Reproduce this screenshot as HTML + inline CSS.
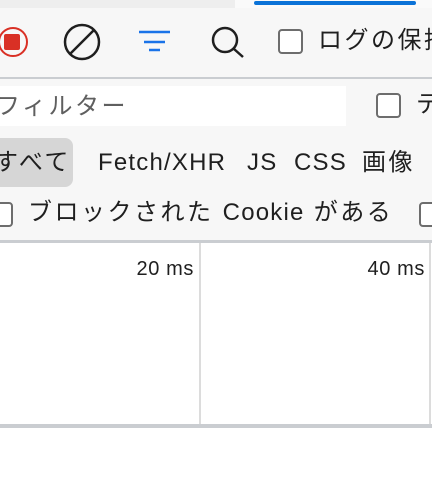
<!DOCTYPE html>
<html><head><meta charset="utf-8"><style>
*{margin:0;padding:0;box-sizing:border-box}
body{width:432px;height:504px;overflow:hidden;background:#fff;font-family:"Liberation Sans","Noto Sans CJK JP",sans-serif;color:#1f1f1f;position:relative}
.a{position:absolute}
.cb{position:absolute;width:25px;height:25px;border:2px solid #6d6d6d;border-radius:4px;background:#fff}
.t{position:absolute;white-space:nowrap;font-size:24px;line-height:30px}
.j{letter-spacing:2.5px}
.l{letter-spacing:1.2px}
</style></head><body>
<div class="a" style="left:0;top:0;width:432px;height:8px;background:#eeeeee"></div>
<div class="a" style="left:235px;top:0;width:197px;height:8px;background:#fafafa"></div>
<div class="a" style="left:254px;top:1px;width:162px;height:4px;background:#0b73d8;border-radius:2px"></div>
<div class="a" style="left:0;top:8px;width:432px;height:233px;background:#f7f7f7"></div>
<svg class="a" style="left:0;top:0" width="432" height="80">
<circle cx="13" cy="42" r="14" fill="none" stroke="#d93025" stroke-width="2"/>
<rect x="4" y="34" width="16" height="16" rx="2" fill="#d93025"/>
<circle cx="82" cy="42" r="17" fill="none" stroke="#1f1f1f" stroke-width="2.5"/>
<line x1="70" y1="54" x2="94" y2="30" stroke="#1f1f1f" stroke-width="2.5"/>
<line x1="139" y1="32" x2="170" y2="32" stroke="#1a73e8" stroke-width="2.5"/>
<line x1="144" y1="42" x2="165" y2="42" stroke="#1a73e8" stroke-width="2.5"/>
<line x1="149" y1="50" x2="160" y2="50" stroke="#1a73e8" stroke-width="2.5"/>
<circle cx="225" cy="40" r="12" fill="none" stroke="#1f1f1f" stroke-width="2.5"/>
<line x1="234" y1="49" x2="243" y2="57" stroke="#1f1f1f" stroke-width="2.5"/>
</svg>
<div class="cb" style="left:278px;top:29px"></div>
<div class="t j" style="left:318px;top:26px">ログの保持</div>
<div class="a" style="left:0;top:77px;width:432px;height:2px;background:#cacdd1"></div>
<div class="a" style="left:0;top:86px;width:346px;height:40px;background:#fff"></div>
<div class="t j" style="left:-4px;top:92px;color:#5f5f5f">フィルター</div>
<div class="cb" style="left:376px;top:93px"></div>
<div class="t" style="left:416px;top:90px">テ</div>
<div class="a" style="left:-10px;top:138px;width:83px;height:49px;background:#d6d6d6;border-radius:8px"></div>
<div class="t j" style="left:-6px;top:148px">すべて</div>
<div class="t l" style="left:98px;top:148px">Fetch/XHR</div>
<div class="t l" style="left:247px;top:148px">JS</div>
<div class="t l" style="left:294px;top:148px">CSS</div>
<div class="t j" style="left:362px;top:148px">画像</div>
<div class="cb" style="left:-12px;top:202px"></div>
<div class="t j" style="left:28px;top:198px">ブロックされた <span class="l" style="letter-spacing:1.2px">Cookie</span> がある</div>
<div class="cb" style="left:419px;top:202px"></div>
<div class="a" style="left:0;top:240px;width:432px;height:3px;background:#cacdd1"></div>
<div class="a" style="left:199px;top:243px;width:2px;height:181px;background:#dcdcdc"></div>
<div class="a" style="left:429px;top:243px;width:2px;height:181px;background:#dcdcdc"></div>
<div class="t" style="left:110px;top:255px;width:84px;text-align:right;font-size:20px;line-height:28px;letter-spacing:0.6px">20 ms</div>
<div class="t" style="left:340px;top:255px;width:85px;text-align:right;font-size:20px;line-height:28px;letter-spacing:0.6px">40 ms</div>
<div class="a" style="left:0;top:424px;width:432px;height:4px;background:#cacdd1"></div>
</body></html>
